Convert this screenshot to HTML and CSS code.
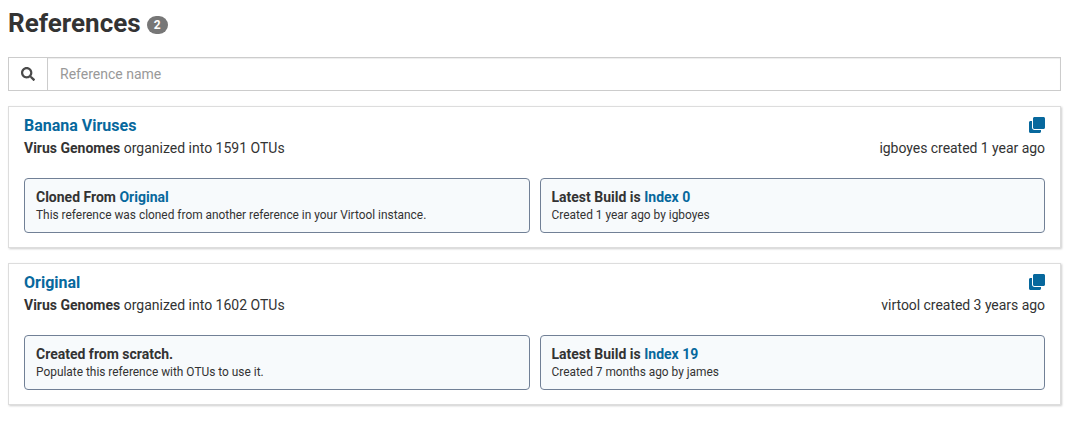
FILE: index.html
```
<!DOCTYPE html>
<html lang="en">
<head>
<meta charset="utf-8">
<title>References</title>
<link rel="stylesheet" href="styles.css">
</head>
<body>
<main class="page">
  <h1 class="title">References <span class="badge">2</span></h1>
  <div class="search">
    <span class="search-icon"><svg width="14" height="14" viewBox="0 0 512 512" fill="currentColor"><path d="M505 442.7L405.3 343c-4.500-4.500-10.600-7-17-7H372c27.600-35.300 44-79.700 44-128C416 93.100 322.900 0 208 0S0 93.100 0 208s93.100 208 208 208c48.300 0 92.700-16.400 128-44v16.300c0 6.400 2.500 12.500 7 17l99.700 99.700c9.400 9.400 24.600 9.400 33.900 0l28.300-28.300c9.400-9.400 9.400-24.600.1-34zM208 336c-70.700 0-128-57.200-128-128 0-70.700 57.200-128 128-128 70.700 0 128 57.200 128 128 0 70.700-57.200 128-128 128z"/></svg></span>
    <input class="search-input" type="text" placeholder="Reference name">
  </div>
  <section class="card">
    <header class="card-head"><a class="name">Banana Viruses</a>
      <svg class="clone" width="16" height="16" viewBox="0 0 512 512" fill="currentColor"><path d="M464 0c26.510 0 48 21.490 48 48v288c0 26.510-21.490 48-48 48H176c-26.510 0-48-21.490-48-48V48c0-26.510 21.490-48 48-48h288M176 416c-44.112 0-80-35.888-80-80V128H48c-26.510 0-48 21.490-48 48v288c0 26.510 21.490 48 48 48h288c26.510 0 48-21.490 48-48v-48H176z"/></svg></header>
    <div class="meta"><span><b>Virus Genomes</b> organized into 1591 OTUs</span><span class="author">igboyes created 1 year ago</span></div>
    <div class="boxes">
      <div class="box"><div class="box-title">Cloned From <a>Original</a></div><div class="box-text">This reference was cloned from another reference in your Virtool instance.</div></div>
      <div class="box"><div class="box-title">Latest Build is <a>Index 0</a></div><div class="box-text">Created 1 year ago by igboyes</div></div>
    </div>
  </section>
  <section class="card">
    <header class="card-head"><a class="name">Original</a>
      <svg class="clone" width="16" height="16" viewBox="0 0 512 512" fill="currentColor"><path d="M464 0c26.510 0 48 21.490 48 48v288c0 26.510-21.490 48-48 48H176c-26.510 0-48-21.490-48-48V48c0-26.510 21.490-48 48-48h288M176 416c-44.112 0-80-35.888-80-80V128H48c-26.510 0-48 21.490-48 48v288c0 26.510 21.490 48 48 48h288c26.510 0 48-21.490 48-48v-48H176z"/></svg></header>
    <div class="meta"><span><b>Virus Genomes</b> organized into 1602 OTUs</span><span class="author">virtool created 3 years ago</span></div>
    <div class="boxes">
      <div class="box"><div class="box-title">Created from scratch.</div><div class="box-text">Populate this reference with OTUs to use it.</div></div>
      <div class="box"><div class="box-title">Latest Build is <a>Index 19</a></div><div class="box-text">Created 7 months ago by james</div></div>
    </div>
  </section>
</main>
</body>
</html>
```
FILE: styles.css
```
* { box-sizing: border-box; }
body { margin: 0; background: #fff; color: #333; font: 14px/20px Roboto, sans-serif; }
b { font-weight: 700; }
a { color: #07689d; }
.page { padding: 8px 12px 0 8px; }
.title { display: flex; align-items: center; gap: 6px; margin: 0 0 19px; height: 30px; font-size: 26px; line-height: 30px; font-weight: 700; }
.badge { min-width: 21px; height: 18px; padding: 3px 7px; margin-top: 4px; border-radius: 10px; background: #777; color: #fff; font-size: 12px; line-height: 12px; text-align: center; }
.search { display: flex; height: 34px; margin-bottom: 15px; border: 1px solid #ccc; }
.search-icon { display: flex; align-items: center; justify-content: center; width: 39px; border-right: 1px solid #ccc; color: #4a4a4a; }
.search-input { flex: 1; padding: 0 12px; border: 0; outline: 0; background: #fff; box-shadow: inset 0 1px 1px rgba(0,0,0,.075); font: inherit; }
.search-input::placeholder { color: #999; opacity: 1; }
.card { height: 142px; margin-bottom: 15px; padding: 8px 15px 15px; border: 1px solid #ddd; box-shadow: 1px 1px 2px rgba(0,0,0,.2); }
.card-head { display: flex; justify-content: space-between; align-items: center; height: 22px; }
.name { font-size: 16px; font-weight: 700; }
.clone { margin-bottom: 2px; color: #07689d; }
.meta { display: flex; justify-content: space-between; margin: 1px 0 20px; }
.author { letter-spacing: -.04px; }
.boxes { display: grid; grid-template-columns: 1fr 1fr; gap: 10px; }
.box { height: 55px; padding: 9px 11px; border: 1px solid #718096; border-radius: 4px; background: #f7fafc; }
.box-title { font-weight: 700; line-height: 18px; }
.box-text { margin-top: 1px; font-size: 11.9px; line-height: 17px; }
```
